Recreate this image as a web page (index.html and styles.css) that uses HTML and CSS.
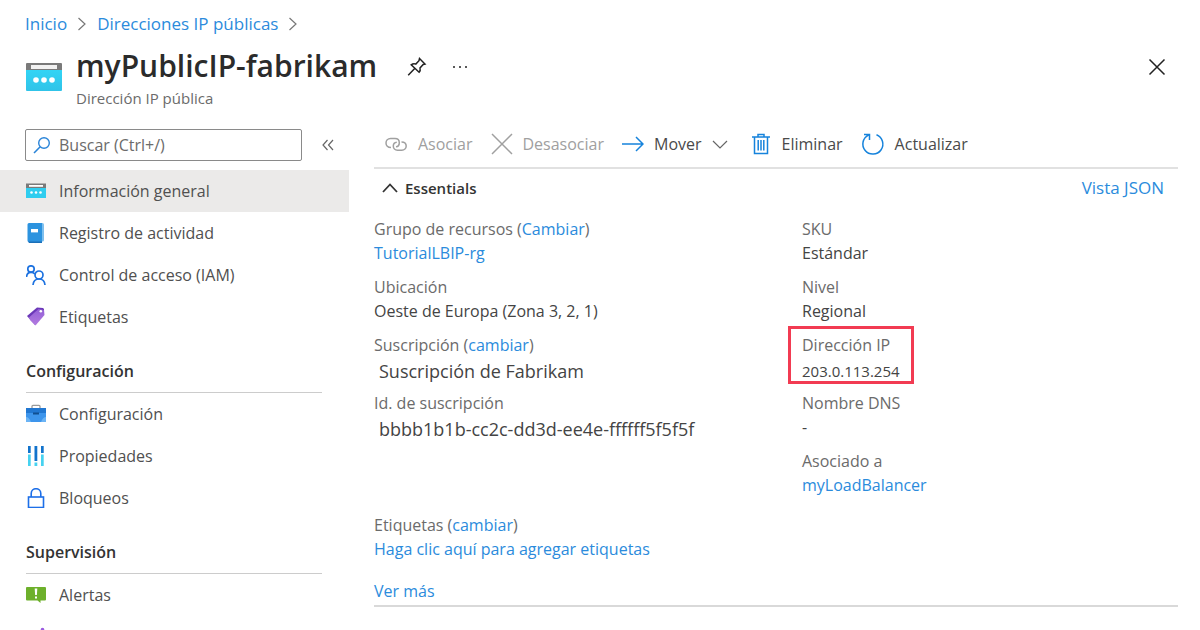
FILE: index.html
```html
<!DOCTYPE html>
<html lang="es">
<head>
<meta charset="utf-8">
<title>myPublicIP-fabrikam</title>
<meta name="viewport" content="width=device-width, initial-scale=1">
<link rel="stylesheet" href="styles.css">
</head>
<body>
<div class="page">
  <nav class="breadcrumb" aria-label="Ruta">
    <a href="#">Inicio</a>
    <svg class="crumb-sep" viewBox="0 0 10 14"><path d="M1.500 1 8 7l-6.500 6"/></svg>
    <a href="#">Direcciones IP públicas</a>
    <svg class="crumb-sep" viewBox="0 0 10 14"><path d="M1.500 1 8 7l-6.500 6"/></svg>
  </nav>

  <header class="header">
    <svg class="header-icon" viewBox="0 0 36 28">
      <defs><linearGradient id="cyan" x1="0" y1="0" x2="0" y2="1"><stop offset="0" stop-color="#32d4f5"/><stop offset="1" stop-color="#30c3e8"/></linearGradient></defs>
      <path d="M0 7h36v20a1 1 0 0 1-1 1H1a1 1 0 0 1-1-1z" fill="url(#cyan)"/>
      <path d="M1 0h34a1 1 0 0 1 1 1v6H0V1a1 1 0 0 1 1-1z" fill="#7a7a7a"/>
      <rect x="5" y="2" width="26" height="4" fill="#f2f2f2"/>
      <circle cx="10" cy="17" r="2.800" fill="#fff"/><circle cx="18" cy="17" r="2.800" fill="#fff"/><circle cx="26" cy="17" r="2.800" fill="#fff"/>
    </svg>
    <div class="header-text">
      <h1>myPublicIP-fabrikam</h1>
      <p>Dirección IP pública</p>
    </div>
    <div class="header-actions">
      <button class="icon-button" aria-label="Anclar">
        <svg width="20" height="20" viewBox="0 0 20 20" class="stroke-dark"><path d="M12.500 1.500 18 7l-1.800.5-3.200 3.400c.5 1.700.1 3.300-.9 4.400L4.200 7.900C5.600 6.800 7.300 6.700 8.800 7.100L12 3.700zM7.700 11.600 1.200 18.300"/></svg>
      </button>
      <button class="icon-button" aria-label="Más">
        <svg width="20" height="20" viewBox="0 0 20 20" fill="#222"><circle cx="4" cy="10" r="1"/><circle cx="10" cy="10" r="1"/><circle cx="16" cy="10" r="1"/></svg>
      </button>
    </div>
    <button class="icon-button close" aria-label="Cerrar">
      <svg width="18" height="18" viewBox="0 0 18 18" class="stroke-dark"><path d="M1.500 1.500l15 15M16.500 1.500l-15 15"/></svg>
    </button>
  </header>

  <div class="columns">
    <aside class="sidebar">
      <div class="search-row">
        <label class="search">
          <svg width="18" height="18" viewBox="0 0 18 18"><path d="M7.200 10.800 1 17" stroke="#2a84d8" stroke-width="1.600"/><circle cx="11" cy="7" r="5.300" fill="none" stroke="#2a84d8" stroke-width="1.400"/></svg>
          <input type="text" placeholder="Buscar (Ctrl+/)" aria-label="Buscar">
        </label>
        <button class="icon-button" aria-label="Contraer">
          <svg width="12" height="12" viewBox="0 0 12 12" class="stroke-gray"><path d="M5.500 1 1 6l4.500 5M11 1 6.500 6 11 11"/></svg>
        </button>
      </div>

      <nav class="menu" aria-label="Menú">
        <a class="menu-item active" href="#">
          <svg viewBox="0 0 20 20"><path d="M0 6h20v11H0z" fill="#2fcdef"/><path d="M0 2.500h20V7H0z" fill="#7a7a7a"/><path d="M3 4h14v1.800H3z" fill="#fff"/><g fill="#fff"><circle cx="5.500" cy="11.500" r="1.300"/><circle cx="10" cy="11.500" r="1.300"/><circle cx="14.500" cy="11.500" r="1.300"/></g></svg>
          Información general</a>
        <a class="menu-item" href="#">
          <svg viewBox="0 0 20 20"><rect x="3" y="0" width="15" height="18.500" rx="1.500" fill="#7fc0ee"/><path d="M3 0h13v19H3a1.500 1.500 0 0 1-1.500-1.500V1.500A1.500 1.500 0 0 1 3 0z" fill="#2c93df"/><path d="M2 18.500h14V20H3z" fill="#1a6fb8"/><rect x="5" y="6" width="7" height="3.400" fill="#fff"/></svg>
          Registro de actividad</a>
        <a class="menu-item" href="#">
          <svg viewBox="0 0 20 20" fill="none" stroke="#1d72e0" stroke-width="1.700"><circle cx="5" cy="4" r="3.200"/><path d="M.5 12C.7 9 2.500 7.300 5 7.300c1.700 0 3 .6 3.800 1.700"/><circle cx="13" cy="10" r="4"/><path d="M7 20c.3-3.800 2.700-6 6-6s5.700 2.200 6 6"/></svg>
          Control de acceso (IAM)</a>
        <a class="menu-item" href="#">
          <svg viewBox="0 0 20 20"><defs><linearGradient id="tag" x1="0" y1="0" x2="0" y2="1"><stop offset="0" stop-color="#9360d6"/><stop offset="1" stop-color="#b37be0"/></linearGradient></defs><path d="M11 .5 17 1l1 1v5L9 18 1 9z" fill="#6b38b8"/><path d="M12.500 2 18 3l.5 5L9.500 18.500 4 13 3 10.500z" fill="url(#tag)"/><circle cx="14.800" cy="4.300" r="1.300" fill="#fff"/></svg>
          Etiquetas</a>

        <h2>Configuración</h2>
        <a class="menu-item" href="#">
          <svg viewBox="0 0 20 20"><path d="M6 4.500V2.300q0-1 1-1h6q1 0 1 1v2.200" fill="none" stroke="#9a9a9a" stroke-width="1.300"/><path d="M0 4h20v6H0z" fill="#2177d1"/><path d="M0 9h20v8q0 1-1 1H1q-1 0-1-1z" fill="#3d95ec"/><path d="M0 13q3 0 5 5H1q-1 0-1-1zM20 13q-3 0-5 5h4q1 0 1-1z" fill="#6bb4f5"/><path d="M7 8.500h6v2H7z" fill="#104f91"/></svg>
          Configuración</a>
        <a class="menu-item" href="#">
          <svg viewBox="0 0 20 20"><path d="M2 0h2.700v7H2zM8.500 0h2.800v15H8.500zM15 0h2.700v7H15z" fill="#1273cc"/><path d="M2 8.500h2.700V20H2zM8.500 16.500h2.800V20H8.500zM15 8.500h2.700V20H15z" fill="#46d2f0"/></svg>
          Propiedades</a>
        <a class="menu-item" href="#">
          <svg viewBox="0 0 20 20" fill="none" stroke="#1d6fe8" stroke-width="1.600"><rect x="2.500" y="9" width="15" height="10.500"/><path d="M5.200 9V5.500a4.800 4.800 0 0 1 9.600 0V9"/></svg>
          Bloqueos</a>

        <h2>Supervisión</h2>
        <a class="menu-item" href="#">
          <svg viewBox="0 0 20 20"><path d="M1 2h18a1 1 0 0 1 1 1v11.500a1 1 0 0 1-1 1h-4.500V18l-3-2.500H1a1 1 0 0 1-1-1V3a1 1 0 0 1 1-1z" fill="#6db02b"/><path d="M8.700 3.500h2.600l-.4 6.500H9.100zM9 11.500h2v2H9z" fill="#fff"/></svg>
          Alertas</a>
        <a class="menu-item" href="#" aria-label="Métricas">
          <svg viewBox="0 0 20 20"><circle cx="16.500" cy="2.500" r="1.800" fill="#9a5be0"/><path d="M3 16 8 9l4 3 4.500-9" fill="none" stroke="#9a5be0"/></svg>
        </a>
      </nav>
    </aside>

    <main class="main">
      <div class="toolbar">
        <button disabled><svg width="24" height="22" viewBox="0 0 24 22" class="stroke-muted"><path d="M7 14.500C3.700 14.500 2 12.400 2 10s1.900-4.500 4.500-4.500H11c2.700 0 4.300 1.900 4.300 4.200 0 2.200-1.500 3.900-3.300 4.100M12.800 9.300c-2 .2-3.500 1.600-3.500 3.700 0 2.300 1.700 4.200 4.200 4.200h4.300c2.500 0 4.400-1.700 4.400-4.100s-1.900-4.200-4.700-4.200"/></svg>Asociar</button>
        <button disabled><svg width="22" height="22" viewBox="0 0 22 22" class="stroke-muted"><path d="M1 1l20 20M21 1 1 21"/></svg>Desasociar</button>
        <button><svg width="22" height="22" viewBox="0 0 22 22" class="stroke-blue"><path d="M0 11h21M14 4l7 7-7 7"/></svg>Mover<svg width="16" height="12" viewBox="0 0 16 12" class="stroke-gray"><path d="M1 3l7 7 7-7"/></svg></button>
        <button><svg width="26" height="22" viewBox="-6 0 26 22" class="stroke-blue"><path d="M0 4h18M6 4V1.500h6V4M2.500 4v16.500h13V4M6.200 7v10.500M9 7v10.500M11.800 7v10.500"/></svg>Eliminar</button>
        <button><svg width="24" height="24" viewBox="0 0 24 24" class="stroke-blue"><path d="M15.500 2.800a10 10 0 1 1-8 .3M3 2.500h5.500V8"/></svg>Actualizar</button>
      </div>

      <section class="essentials">
        <div class="essentials-head">
          <button class="toggle" aria-expanded="true"><svg width="16" height="12" viewBox="0 0 16 12"><path d="M1 10l7-7.500 7 7.500"/></svg>Essentials</button>
          <a href="#">Vista JSON</a>
        </div>
        <div class="facts">
          <dl>
            <div class="fact"><dt>Grupo de recursos (<a href="#">Cambiar</a>)</dt><dd><a href="#">TutorialLBIP-rg</a></dd></div>
            <div class="fact"><dt>Ubicación</dt><dd>Oeste de Europa (Zona 3, 2, 1)</dd></div>
            <div class="fact"><dt>Suscripción (<a href="#">cambiar</a>)</dt><dd class="large">Suscripción de Fabrikam</dd></div>
            <div class="fact"><dt>Id. de suscripción</dt><dd class="large">bbbb1b1b-cc2c-dd3d-ee4e-ffffff5f5f5f</dd></div>
          </dl>
          <dl>
            <div class="fact"><dt>SKU</dt><dd>Estándar</dd></div>
            <div class="fact"><dt>Nivel</dt><dd>Regional</dd></div>
            <div class="fact marked"><dt>Dirección IP</dt><dd class="address">203.0.113.254</dd></div>
            <div class="fact"><dt>Nombre DNS</dt><dd>-</dd></div>
            <div class="fact"><dt>Asociado a</dt><dd><a href="#">myLoadBalancer</a></dd></div>
          </dl>
        </div>
        <dl class="tags">
          <div class="fact"><dt>Etiquetas (<a href="#">cambiar</a>)</dt><dd><a href="#">Haga clic aquí para agregar etiquetas</a></dd></div>
        </dl>
        <a class="more" href="#">Ver más</a>
      </section>
    </main>
  </div>
</div>
</body>
</html>
```
FILE: styles.css
```css
* { box-sizing: border-box; }
html, body { height: 100%; }
body {
  margin: 0;
  overflow: hidden;
  background: #fff;
  color: #4a4a4a;
  font: 16px/24px "Open Sans", "Noto Sans", sans-serif;
}
a { color: #2b8bdc; text-decoration: none; }
h1, h2, p, dl, dd { margin: 0; }
button {
  padding: 0;
  border: 0;
  background: none;
  color: inherit;
  font: inherit;
}
svg { flex: none; }
.stroke-dark, .stroke-gray, .stroke-muted, .stroke-blue { fill: none; stroke-width: 1.5; }
.stroke-dark { stroke: #222; }
.stroke-gray { stroke: #666; stroke-width: 1.2; }
.stroke-muted { stroke: #a0a0a0; }
.stroke-blue { stroke: #1683dc; }

.breadcrumb {
  display: flex;
  align-items: center;
  gap: 10px;
  padding: 12px 25px 0;
  font-size: 17px;
}
.crumb-sep { width: 10px; height: 14px; fill: none; stroke: #777; stroke-width: 1.2; }

.header {
  display: flex;
  align-items: flex-start;
  padding: 8px 34px 0 26px;
}
.header-icon { width: 36px; height: 28px; margin: 19px 14px 0 0; }
.header-text h1 { color: #2b2b2b; font-size: 30px; font-weight: 600; line-height: 44px; }
.header-text p { color: #6b6b6b; font-size: 15px; line-height: 20px; }
.icon-button { display: flex; align-items: center; }
.header .icon-button { height: 46px; }
.header-actions { display: flex; gap: 23px; margin-left: 30px; }
.header .close { margin-left: auto; }

.columns { display: flex; padding-top: 21px; }
.sidebar { flex: none; width: 349px; }
.search-row { display: flex; align-items: center; justify-content: space-between; padding: 0 15px 0 25px; }
.search {
  display: flex;
  align-items: center;
  gap: 8px;
  width: 277px;
  height: 32px;
  padding: 0 7px;
  border: 1px solid #8a8a8a;
  border-radius: 2px;
}
.search input { flex: 1; min-width: 0; padding: 0; border: 0; outline: 0; background: none; color: inherit; font: inherit; }
.search input::placeholder { color: #6b6b6b; opacity: 1; }

.menu { padding-top: 9px; }
.menu-item { display: flex; align-items: center; gap: 13px; height: 42px; padding-left: 26px; color: #505050; }
.menu-item svg { width: 20px; height: 20px; }
.menu-item.active { background: #ebeae9; }
.menu h2 {
  margin: 12px 27px 0 26px;
  border-bottom: 1px solid #ccc;
  color: #333;
  font-size: 16px;
  font-weight: 600;
  line-height: 42px;
}

.main { flex: 1; min-width: 0; padding: 0 22px 0 25px; }
.toolbar { display: flex; align-items: flex-start; gap: 18px; height: 40px; padding-left: 10px; border-bottom: 2px solid #e1e1e1; }
.toolbar button { display: flex; align-items: center; gap: 10px; height: 30px; }
.toolbar button:disabled { color: #a0a0a0; }

.essentials { border-bottom: 2px solid #d9d9d9; }
.essentials-head { display: flex; justify-content: space-between; align-items: center; height: 38px; padding: 0 14px 0 8px; font-size: 17px; }
.toggle { display: flex; align-items: center; gap: 7px; color: #333; font-weight: 600; font-size: 15px; }
.toggle svg { fill: none; stroke: #333; stroke-width: 1.8; }

.facts { display: grid; grid-template-columns: 428px 1fr; padding-top: 10px; }
.facts dl { display: grid; grid-auto-rows: minmax(58px, auto); align-content: start; }
.fact { position: relative; align-self: start; justify-self: start; }
.fact dt { color: #6b6b6b; }
.fact dd { color: #444; }
.fact dd a { color: #2b8bdc; }
.fact .large { padding: 2px 0 0 5px; font-size: 18px; }
.fact .address { padding-top: 2px; font-size: 15px; }
.marked::after {
  content: "";
  position: absolute;
  inset: -7px -14px -1px -14px;
  border: 3px solid #f23b52;
}
.tags { padding-top: 6px; }
.more { display: block; margin: 18px 0 2px; }
```
